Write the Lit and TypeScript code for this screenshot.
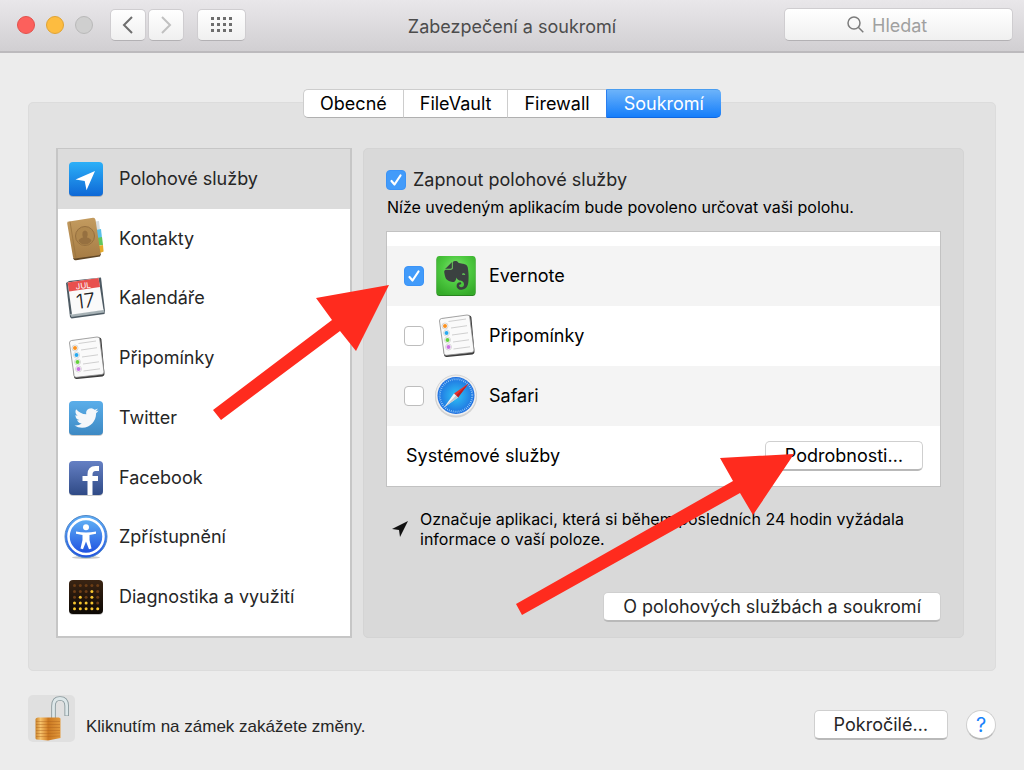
import { LitElement, html, css, svg } from "lit";
import { customElement, state, property } from "lit/decorators.js";
import { classMap } from "lit/directives/class-map.js";

const grad = (id: string, from: string, to: string) => svg`
  <linearGradient id=${id} x1="0" y1="0" x2="0" y2="1">
    <stop offset="0" stop-color=${from}></stop><stop offset="1" stop-color=${to}></stop>
  </linearGradient>`;

const dotRows: number[][] = [[], [3], [1, 3], [0, 1, 2, 3], [0, 1, 2, 3, 4]];

// Artwork is drawn on a 44 by 44 grid.
const art: Record<string, unknown> = {
  location: svg`
    <defs>${grad("g", "#2cb0f8", "#0e68d6")}</defs>
    <rect x="5" y="6" width="34" height="34" rx="4" fill="#0003"></rect>
    <rect x="5" y="5" width="34" height="34" rx="4" fill="url(#g)"></rect>
    <path d="M31 14 L11.500 22.500 L20.700 24 L22.500 33.300 Z" fill="#fff"></path>`,
  contacts: svg`
    <defs>${grad("g", "#c39b5f", "#a67c45")}</defs>
    <path d="M31 4.500 l4 -.5 1 9 -5 1z" fill="#d9dcdd"></path>
    <path d="M32 13 l5 -1 1 9 -6 1z" fill="#58bfe8"></path>
    <path d="M33 21 l5 -1 1 8 -6 1z" fill="#62c65c"></path>
    <path d="M34 29 l5 -1 .6 6.500 -5 2z" fill="#e5a92a"></path>
    <path d="M9 41 L10 42.800 Q10.500 43.500 12 43.200 L36 39.600 L37 37 L35 35z" fill="#5e4526"></path>
    <path d="M3.500 4.800 L29 .8 Q31 .6 31.500 2.800 L36.500 36.200 Q36.500 37.800 35 38.200 L11 41.600 Q9.300 41.800 9 40 L3.200 6.500z" fill="url(#g)"></path>
    <path d="M6 4.600 L12 41.300" stroke="#99733f" stroke-width=".8"></path>
    <circle cx="21" cy="19" r="9.500" fill="#b0884e" stroke="#967040"></circle>
    <path d="M14.500 24 Q15 21.500 19 20.500 Q17 14 21 13.500 Q25 14 23 20.500 Q27 21.500 27.500 24 Q24.500 27.500 21 27.500 Q17 27.500 14.500 24z" fill="#967040"></path>`,
  calendar: svg`
    <path d="M2 7 L5 5 L37 1.500 L41 35 L40.500 38 L7.500 42.500 L6 41z" fill="#4d5a63"></path>
    <path d="M6 38 L40 33.500 L40.500 36.500 L7.500 41z" fill="#a6b1b5"></path>
    <path d="M3.700 6.500 L34.500 2 L39.500 34 L8 38.500z" fill="#fafafa"></path>
    <path d="M3.700 6.500 L34.500 2 L36 11 L5 15.500z" fill="#e8504d"></path>
    <g transform="rotate(-7 20 20)" font-family="Inter, sans-serif" text-anchor="middle">
      <text x="20.500" y="12.500" font-size="8" fill="#fff">JUL</text>
      <text x="21" y="32" font-size="20" font-weight="300" fill="#222">17</text>
    </g>`,
  reminders: svg`
    <path d="M7 5 L35 1.500 Q37 1.300 37.400 3.300 L40.500 38 Q40.500 40 38.500 40.400 L13 43 Q10.500 43.300 10 41z" fill="#3b3b3b"></path>
    <path d="M7.500 4.500 L33 1 Q35.300 .8 35.700 2.800 L40 36 Q40 38 38 38.400 L12.500 41.300 Q10.300 41.500 10 39.500 L5.500 7 Q5.300 5 7.500 4.500z" fill="#fafafa" stroke="#8b8b8b" stroke-width=".8"></path>
    <g stroke="#c4c4c4" stroke-width=".8">
      <path d="M14.500 7.500 L32 5M17 14 L33 11.700M18 21 L34 18.800M19 28 L35 25.800M19.500 35 L36 32.800"></path>
    </g>
    <g fill="#fff" stroke="#c8c8c8" stroke-width=".7">
      <circle cx="11" cy="12" r="3"></circle><circle cx="12.500" cy="19" r="3"></circle>
      <circle cx="13.500" cy="26" r="3"></circle><circle cx="14.500" cy="33" r="3"></circle>
    </g>
    <circle cx="11" cy="12" r="2" fill="#fb9120"></circle><circle cx="12.500" cy="19" r="2" fill="#28a8ee"></circle>
    <circle cx="13.500" cy="26" r="2" fill="#64d03d"></circle><circle cx="14.500" cy="33" r="2" fill="#c973e2"></circle>`,
  twitter: svg`
    <defs>${grad("g", "#5aaeea", "#3d89c3")}</defs>
    <rect x="5" y="6" width="34" height="34" rx="4" fill="#0003"></rect>
    <rect x="5" y="5" width="34" height="34" rx="4" fill="url(#g)"></rect>
    <path transform="translate(10.500 10)" fill="#f4f7fa" d="M23.953 4.570a10 10 0 01-2.825.775 4.958 4.958 0 002.163-2.723c-.951.555-2.005.959-3.127 1.184a4.920 4.920 0 00-8.384 4.482C7.690 8.095 4.067 6.130 1.640 3.162a4.822 4.822 0 00-.666 2.475c0 1.710.87 3.213 2.188 4.096a4.904 4.904 0 01-2.228-.616v.06a4.923 4.923 0 003.946 4.827 4.996 4.996 0 01-2.212.085 4.936 4.936 0 004.604 3.417 9.867 9.867 0 01-6.102 2.105c-.39 0-.779-.023-1.170-.067a13.995 13.995 0 007.557 2.209c9.053 0 13.998-7.496 13.998-13.985 0-.21 0-.42-.015-.63A9.935 9.935 0 0024 4.590z"></path>`,
  facebook: svg`
    <defs>${grad("g", "#6580c4", "#2f4a86")}</defs>
    <rect x="5" y="6" width="34" height="34" rx="4" fill="#0003"></rect>
    <rect x="5" y="5" width="34" height="34" rx="4" fill="url(#g)"></rect>
    <path d="M26 39 V18.500 Q26 12.500 31.500 12.500 H35M18.500 22.500 H34" fill="none" stroke="#fff" stroke-width="5"></path>`,
  accessibility: svg`
    <defs>${grad("g", "#5fb0f5", "#1f50e0")}</defs>
    <ellipse cx="22" cy="42.500" rx="14" ry="1.500" fill="#0003"></ellipse>
    <circle cx="22" cy="21.500" r="21" fill="url(#g)" stroke="#4f86c8"></circle>
    <circle cx="22" cy="21.500" r="17.500" fill="url(#g)" stroke="#fff" stroke-width="2.500"></circle>
    <circle cx="22" cy="12.200" r="3" fill="#fff"></circle>
    <path d="M12 16.500 Q22 18.500 32 16.500 V18.700 L25.500 20 V25 L27.500 33.500 L25 34.200 L22 26.500 L19 34.200 L16.500 33.500 L18.500 25 V20 L12 18.700z" fill="#fff"></path>`,
  diagnostics: svg`
    <defs>${grad("g", "#3a2413", "#0c0804")}</defs>
    <rect x="5" y="6" width="34" height="34" rx="4" fill="#0003"></rect>
    <rect x="5" y="5" width="34" height="34" rx="4" fill="url(#g)"></rect>
    ${dotRows.map((lit, r) => [0, 1, 2, 3, 4].map((c) => svg`
      <circle cx=${10.5 + c * 5.8} cy=${10.6 + r * 5.8} r="1.500" fill=${lit.includes(c) ? "#f7c62f" : "#6b3d16"}></circle>`))}`,
  evernote: svg`
    <defs><radialGradient id="g" cx=".5" cy=".35" r=".7"><stop offset="0" stop-color="#8be37a"></stop>
      <stop offset=".5" stop-color="#4fcb42"></stop><stop offset="1" stop-color="#35ab29"></stop></radialGradient></defs>
    <rect x="2.500" y="3" width="39" height="39" rx="3" fill="#2a8421"></rect>
    <rect x="2.500" y="2" width="39" height="39" rx="3" fill="url(#g)"></rect>
    <path transform="translate(8 7) scale(1.200)" fill="#3b4140" d="M8.222 5.393c0 .239-.02.637-.256.895-.257.24-.652.259-.888.259H4.552c-.73 0-1.165 0-1.460.04-.159.02-.356.1-.455.14-.04.019-.04 0-.02-.02L8.380.796c.02-.02.04-.02.02.02-.04.099-.118.298-.138.457-.04.298-.04.736-.04 1.472zm5.348 17.869c-.67-.438-1.026-1.015-1.164-1.373a2.924 2.924 0 01-.217-1.095 3.007 3.007 0 013-3.004c.493 0 .888.398.888.895a.88.88 0 01-.454.776c-.099.06-.237.1-.336.12-.098.02-.473.06-.65.218-.198.16-.356.418-.356.697 0 .298.118.577.316.776.355.358.829.557 1.342.557a2.436 2.436 0 002.427-2.447c0-1.214-.809-2.290-1.875-2.766-.158-.08-.414-.14-.651-.2a8.040 8.040 0 00-.592-.1c-.829-.1-2.901-.755-3.040-2.605 0 0-.611 2.785-1.835 3.540-.118.06-.276.12-.454.16-.177.04-.374.06-.434.06-1.993.12-4.105-.517-5.565-2.030 0 0-.987-.815-1.500-3.103-.118-.558-.355-1.553-.493-2.488-.06-.338-.08-.597-.099-.836 0-.975.592-1.631 1.342-1.730h4.026c.69 0 1.086-.18 1.342-.42.336-.317.415-.775.415-1.312V1.354C9.050.617 9.703 0 10.669 0h.474c.197 0 .434.02.651.04.158.02.296.06.533.12 1.204.298 1.460 1.532 1.460 1.532s2.270.398 3.415.597c1.085.199 3.770.378 4.282 3.104 1.204 6.487.474 12.775.415 12.775-.849 6.129-5.901 5.830-5.901 5.830a4.100 4.100 0 01-2.428-.736zm4.540-13.034c-.652-.06-1.204.2-1.402.697-.04.1-.079.219-.059.278.02.06.06.08.099.1.237.12.631.179 1.204.239.572.06.967.1 1.223.06.04 0 .08-.02.119-.08.04-.06.02-.18.02-.28-.06-.536-.553-.934-1.204-1.014z"></path>`,
  safari: svg`
    <defs><radialGradient id="g"><stop offset="0" stop-color="#2fc4f5"></stop><stop offset="1" stop-color="#1f6fe0"></stop></radialGradient></defs>
    <circle cx="22" cy="22.500" r="21" fill="#0002"></circle>
    <circle cx="22" cy="21.500" r="20.500" fill="#efefef" stroke="#cfcfcf" stroke-width=".8"></circle>
    <circle cx="22" cy="21.500" r="18.500" fill="url(#g)"></circle>
    <circle cx="22" cy="21.500" r="16.300" fill="none" stroke="#a9d8fb" stroke-width="2" stroke-dasharray=".7 1.300"></circle>
    <path d="M34.500 9.500 L24 23.500 L20 19.500z" fill="#e8332c"></path>
    <path d="M34.500 9.500 L24 23.500 L22 21.500z" fill="#b81f25"></path>
    <path d="M10 33.500 L20 19.500 L24 23.500z" fill="#f3f3f3"></path>
    <path d="M10 33.500 L22 21.500 L24 23.500z" fill="#c3c9cf"></path>`,
};

@customElement("app-icon")
class AppIcon extends LitElement {
  @property() name = "";
  static styles = css`
    :host { display: block; flex: none; width: 44px; height: 44px; }
    svg { display: block; overflow: visible; }
  `;
  render() {
    return html`<svg width="44" height="44" viewBox="0 0 44 44" aria-hidden="true">${art[this.name]}</svg>`;
  }
}

@customElement("app-root")
class AppRoot extends LitElement {
  @state() private tab = "Soukromí";
  @state() private category = "location";

  private tabs = ["Obecné", "FileVault", "Firewall", "Soukromí"];
  private categories = [
    ["location", "Polohové služby"],
    ["contacts", "Kontakty"],
    ["calendar", "Kalendáře"],
    ["reminders", "Připomínky"],
    ["twitter", "Twitter"],
    ["facebook", "Facebook"],
    ["accessibility", "Zpřístupnění"],
    ["diagnostics", "Diagnostika a využití"],
  ];
  private apps: [string, string, boolean][] = [
    ["evernote", "Evernote", true],
    ["reminders", "Připomínky", false],
    ["safari", "Safari", false],
  ];

  static styles = css`
    :host {
      display: block;
      position: relative;
      min-height: 100vh;
      background: #ececec;
      color: #262626;
      font: 18px/24px Inter, "Noto Sans", sans-serif;
    }
    * { box-sizing: border-box; }
    button, input { font: inherit; color: inherit; margin: 0; }
    svg { display: block; }

    .titlebar {
      display: grid;
      grid-template-columns: 1fr auto 1fr;
      align-items: center;
      height: 53px;
      padding: 0 11px 2px;
      background: linear-gradient(#e9e7ea, #d1cfd2);
      border-bottom: 2px solid #bcbabd;
    }
    .left { display: flex; align-items: center; }
    .lights { display: flex; gap: 11px; margin: 0 17px 0 6px; }
    .light { width: 18px; height: 18px; padding: 0; border-radius: 50%; border: 1px solid #e2514c; background: #fc605c; }
    .light.min { border-color: #e0a333; background: #fdbc40; }
    .light.max { border-color: #b9b9b9; background: #cfcfcf; }
    .tool {
      display: grid;
      place-items: center;
      height: 32px;
      width: 36px;
      padding: 0;
      border: 1px solid #cfcdd0;
      border-bottom-color: #b3b1b4;
      border-radius: 5px;
      background: linear-gradient(#fff, #f0f0f0);
    }
    .nav { display: flex; gap: 2px; margin-right: 13px; }
    .tool.grid { width: 49px; }
    .title { margin: 0; padding-top: 5px; font-size: 18px; font-weight: 400; color: #4c4c4c; }
    .search {
      justify-self: end;
      display: flex;
      align-items: center;
      justify-content: center;
      gap: 8px;
      width: 229px;
      height: 33px;
      border: 1px solid #cfcdd0;
      border-bottom-color: #b3b1b4;
      border-radius: 5px;
      background: linear-gradient(#fff, #f0f0f0);
    }
    .search input { width: 78px; padding: 3px 0 0; border: 0; outline: 0; background: none; }
    .search input::placeholder { color: #a0a0a0; opacity: 1; }

    main { padding: 36px 28px 0; }
    .tabs { display: flex; justify-content: center; position: relative; }
    .tab {
      height: 29px;
      padding: 0 16px;
      border: 1px solid #cdcdcd;
      border-bottom-color: #b0b0b0;
      border-right-width: 0;
      background: #fff;
      color: #000;
    }
    .tab:first-child { border-radius: 5px 0 0 5px; }
    .tab:last-child { padding: 0 17px; border-radius: 0 5px 5px 0; }
    .tab.on { color: #fff; background: linear-gradient(#6cb3fa, #157efb); border-color: #4a9df0 #2a7ff0 #1268e0; }

    .group {
      display: flex;
      gap: 11px;
      margin-top: -16px;
      padding: 45px 31px 32px 27px;
      border: 1px solid #dcdcdc;
      border-radius: 5px;
      background: #e2e2e2;
    }
    .categories {
      display: grid;
      grid-auto-rows: 1fr;
      flex: none;
      width: 296px;
      margin: 0;
      padding: 0 0 9px;
      list-style: none;
      border: 2px solid #c6c6c6;
      border-width: 1px 2px 2px;
      background: #fff;
    }
    .category {
      display: flex;
      align-items: center;
      gap: 11px;
      width: 100%;
      height: 100%;
      padding: 0 6px;
      border: 0;
      background: none;
      text-align: left;
    }
    .category.on { background: #dcdcdc; }

    .panel {
      flex: 1;
      min-width: 0;
      padding: 19px 22px 15px;
      border: 1px solid #d4d4d4;
      border-radius: 5px;
      background: #d9d9d9;
    }
    .enable { display: flex; align-items: center; gap: 7px; }
    .check {
      display: grid;
      flex: none;
      place-items: center;
    }
    .check > * { grid-area: 1 / 1; }
    .check input {
      appearance: none;
      width: 20px;
      height: 20px;
      border: 1px solid #bdbdbd;
      border-radius: 4px;
      background: #fff;
    }
    .check input:checked { border-color: #3b93f7; background: #429bfa; }
    .check svg { visibility: hidden; pointer-events: none; }
    .check input:checked + svg { visibility: visible; }
    .hint { margin: 5px 0 0 1px; font-size: 16px; line-height: 20px; color: #000; }
    .apps {
      margin-top: 14px;
      padding-top: 14px;
      border: 1px solid #c2c2c2;
      background: #fff;
      color: #000;
    }
    .app { display: flex; align-items: center; height: 60px; padding: 0 17px; }
    .app.shaded { background: #f4f4f4; }
    .app app-icon { margin: 0 11px 0 10px; }
    .app.system { justify-content: space-between; padding-left: 19px; }
    .push {
      height: 30px;
      padding: 0 19px;
      border: 1px solid #cfcfcf;
      border-bottom: 2px solid #b9b9b9;
      border-radius: 5px;
      background: #fff;
    }
    .note { display: flex; align-items: center; gap: 12px; margin: 22px 0 43px 6px; font-size: 16px; line-height: 20px; color: #000; }
    .note p { margin: 0; max-width: 500px; }
    .about { display: flex; justify-content: flex-end; }

    footer { display: flex; align-items: center; padding: 24px 0; }
    .lock { width: 47px; height: 47px; padding: 0; border: 0; border-radius: 5px; background: #e0e0e0; }
    .locktext { flex: 1; margin: 16px 0 0 11px; font: 17px/24px "Liberation Sans", Arial, sans-serif; }
    .actions { display: flex; align-items: center; gap: 18px; margin-top: 13px; }
    .help {
      width: 30px;
      height: 30px;
      padding: 0;
      border: 1px solid #cfcfcf;
      border-bottom: 2px solid #b9b9b9;
      border-radius: 50%;
      background: #fff;
      color: #1a82fb;
      font-size: 20px;
    }
    .arrows { position: absolute; top: 0; left: 0; pointer-events: none; }
  `;

  private checkbox(id: string, on: boolean) {
    return html`<span class="check">
      <input type="checkbox" id=${id} ?checked=${on} />
      <svg width="20" height="20" viewBox="0 0 20 20" fill="none" stroke="#fff" stroke-width="2.200"
        stroke-linecap="round" stroke-linejoin="round"><path d="M5.500 11 L8.500 14.500 L14.500 5.500"></path></svg>
    </span>`;
  }

  render() {
    return html`
      <header class="titlebar">
        <div class="left">
          <div class="lights">
            <button class="light" aria-label="Zavřít"></button>
            <button class="light min" aria-label="Minimalizovat"></button>
            <button class="light max" aria-label="Zvětšit" disabled></button>
          </div>
          <div class="nav">
            <button class="tool" aria-label="Zpět"><svg width="12" height="18" viewBox="0 0 12 18" fill="none" stroke="#6e6e6e" stroke-width="2"><path d="M10 1 L2 9 L10 17"></path></svg></button>
            <button class="tool" aria-label="Vpřed"><svg width="12" height="18" viewBox="0 0 12 18" fill="none" stroke="#c0c0c0" stroke-width="2"><path d="M2 1 L10 9 L2 17"></path></svg></button>
          </div>
          <button class="tool grid" aria-label="Zobrazit vše">
            <svg width="21" height="15" viewBox="0 0 21 15" fill="#6e6e6e">
              ${[0, 1, 2].map((r) => [0, 1, 2, 3].map((c) => svg`<rect x=${c * 6} y=${r * 6} width="3" height="3"></rect>`))}
            </svg>
          </button>
        </div>
        <h1 class="title">Zabezpečení a soukromí</h1>
        <label class="search">
          <svg width="17" height="17" viewBox="0 0 17 17" fill="none" stroke="#7c7c7c" stroke-width="1.500"><circle cx="7" cy="7" r="6"></circle><path d="M11.300 11.300 L16.300 16.300"></path></svg>
          <input type="text" placeholder="Hledat" aria-label="Hledat" />
        </label>
      </header>

      <main>
        <div class="tabs" role="tablist">
          ${this.tabs.map((t) => html`<button role="tab" aria-selected=${t === this.tab}
            class=${classMap({ tab: true, on: t === this.tab })} @click=${() => (this.tab = t)}>${t}</button>`)}
        </div>

        <div class="group">
          <ul class="categories">
            ${this.categories.map(([id, label]) => html`<li><button
              class=${classMap({ category: true, on: id === this.category })}
              @click=${() => (this.category = id)}><app-icon name=${id}></app-icon>${label}</button></li>`)}
          </ul>

          <section class="panel">
            <div class="enable">${this.checkbox("enable", true)}<label for="enable">Zapnout polohové služby</label></div>
            <p class="hint">Níže uvedeným aplikacím bude povoleno určovat vaši polohu.</p>
            <div class="apps">
              ${this.apps.map(([id, label, on], i) => html`<div class=${classMap({ app: true, shaded: i % 2 === 0 })}>
                ${this.checkbox(id, on)}<app-icon name=${id}></app-icon><label for=${id}>${label}</label></div>`)}
              <div class="app system"><span>Systémové služby</span><button class="push">Podrobnosti…</button></div>
            </div>
            <div class="note">
              <svg width="16" height="16" viewBox="0 0 16 16"><path d="M16 0 L0 8 L7 9 L8 16 Z" fill="#111"></path></svg>
              <p>Označuje aplikaci, která si během posledních 24 hodin vyžádala informace o vaší poloze.</p>
            </div>
            <div class="about"><button class="push">O polohových službách a soukromí</button></div>
          </section>
        </div>

        <footer>
          <button class="lock" aria-label="Zámek">
            <svg width="47" height="47" viewBox="0 0 47 47">
              <defs>
                <linearGradient id="brass"><stop offset="0" stop-color="#c9822b"></stop><stop offset=".2" stop-color="#f6c26b"></stop>
                  <stop offset=".45" stop-color="#d98a30"></stop><stop offset=".5" stop-color="#c97720"></stop><stop offset="1" stop-color="#e39a3d"></stop></linearGradient>
              </defs>
              <path d="M25.500 24 V11 Q25.500 3.500 32 3.500 Q38.700 3.500 38.700 11 V21" fill="none" stroke="#87979b" stroke-width="4.500"></path>
              <path d="M25.500 24 V11 Q25.500 3.500 32 3.500 Q38.700 3.500 38.700 11 V20.500" fill="none" stroke="#dde7e9" stroke-width="2.800"></path>
              <path d="M7.500 24 Q8 22.500 10 22.500 H31 L32.500 23.500 V43 L20 45.500 L8.500 44.500 Q7.500 44 7.500 43z" fill="url(#brass)"></path>
              <path d="M8 26.500 H19.500 H32M8 29.500 H19.500 H32M8 32.500 H19.500 H32M8 35.500 H19.500 H32M8 38.500 H19.500 L32 38M8 41.500 H19.500 L32 41" stroke="#a9601b" stroke-width=".8" fill="none" opacity=".5"></path>
            </svg>
          </button>
          <p class="locktext">Kliknutím na zámek zakážete změny.</p>
          <div class="actions">
            <button class="push">Pokročilé…</button>
            <button class="help" aria-label="Nápověda">?</button>
          </div>
        </footer>
      </main>

      <svg class="arrows" width="800" height="620" viewBox="0 0 800 620" fill="#ff2b1e" aria-hidden="true">
        <path d="M389 285 L316 298 L332 320 L213 410 L221 420 L340 331 L356 351z"></path>
        <path d="M794 454 L720 458 L733 481 L516 604 L522 615 L740 493 L753 515z"></path>
      </svg>
    `;
  }
}
